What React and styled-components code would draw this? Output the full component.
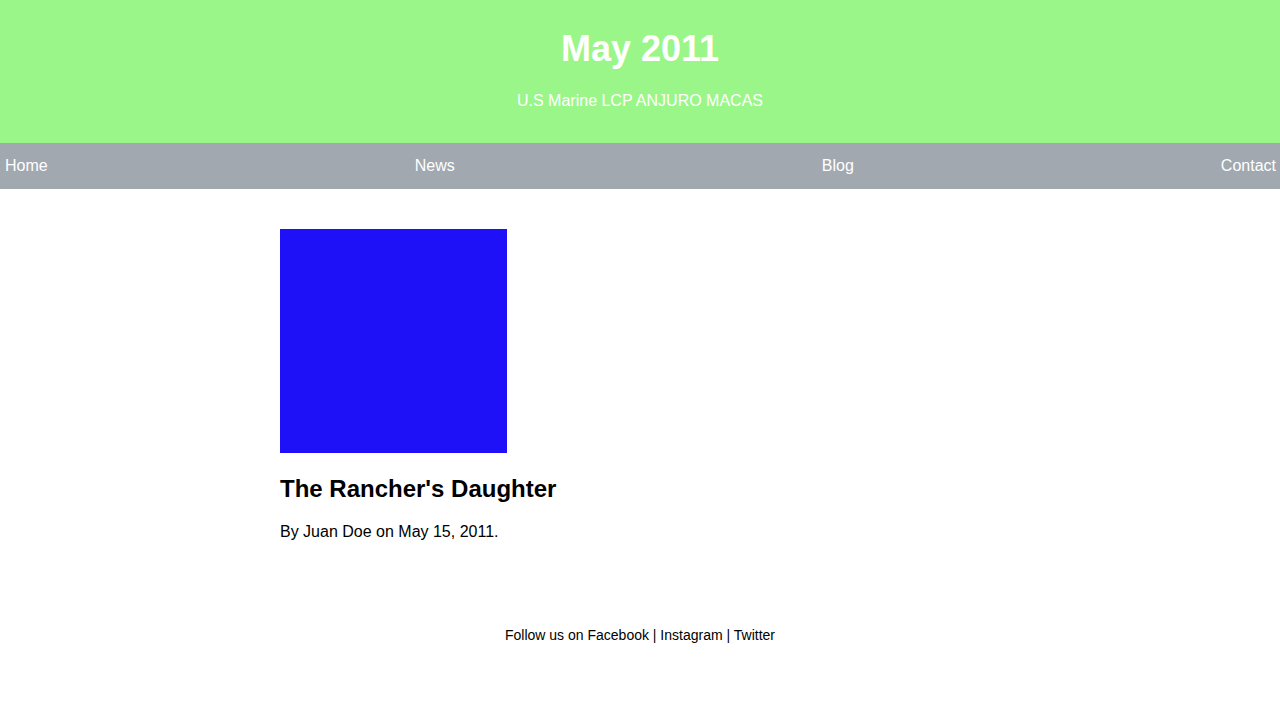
import React from "react";
import styled, { createGlobalStyle } from "styled-components";

const Global = createGlobalStyle`
  html, body { margin: 0; padding: 0; background: #ffffff; }
  body { font-family: "Liberation Sans", Arial, sans-serif; }
`;

const Header = styled.header`
  background: #9bf68a;
  color: #ffffff;
  text-align: center;
  padding: 28px 0 33px;
`;

const Title = styled.h1`
  margin: 0;
  font-size: 36px;
  font-weight: 700;
`;

const Subtitle = styled.p`
  margin: 22px 0 0;
  font-size: 16px;
`;

const Nav = styled.nav`
  background: #a1a8b0;
  height: 46px;
  display: flex;
  align-items: center;
  justify-content: space-between;
  padding: 0 4px 0 5px;
`;

const NavLink = styled.a`
  color: #ffffff;
  font-size: 16px;
  text-decoration: none;
`;

const Main = styled.main`
  width: 720px;
  margin: 0 auto;
  padding-top: 40px;
`;

const Article = styled.article`
  display: flex;
  flex-direction: column;
  align-items: flex-start;
`;

const Thumb = styled.div`
  width: 227px;
  height: 224px;
  background: #1e11f8;
`;

const ArticleTitle = styled.h2`
  margin: 22px 0 0;
  font-size: 24px;
  font-weight: 700;
  color: #000;
`;

const Byline = styled.p`
  margin: 20px 0 0;
  font-size: 16px;
  color: #000;
`;

const Footer = styled.footer`
  text-align: center;
  font-size: 14px;
  color: #000;
  margin-top: 86px;
`;

export default function App() {
  return (
    <>
      <Global />
      <Header>
        <Title>May 2011</Title>
        <Subtitle>U.S Marine LCP ANJURO MACAS</Subtitle>
      </Header>
      <Nav>
        <NavLink href="#">Home</NavLink>
        <NavLink href="#">News</NavLink>
        <NavLink href="#">Blog</NavLink>
        <NavLink href="#">Contact</NavLink>
      </Nav>
      <Main>
        <Article>
          <Thumb />
          <ArticleTitle>The Rancher's Daughter</ArticleTitle>
          <Byline>By Juan Doe on May 15, 2011.</Byline>
        </Article>
      </Main>
      <Footer>Follow us on Facebook | Instagram | Twitter</Footer>
    </>
  );
}
